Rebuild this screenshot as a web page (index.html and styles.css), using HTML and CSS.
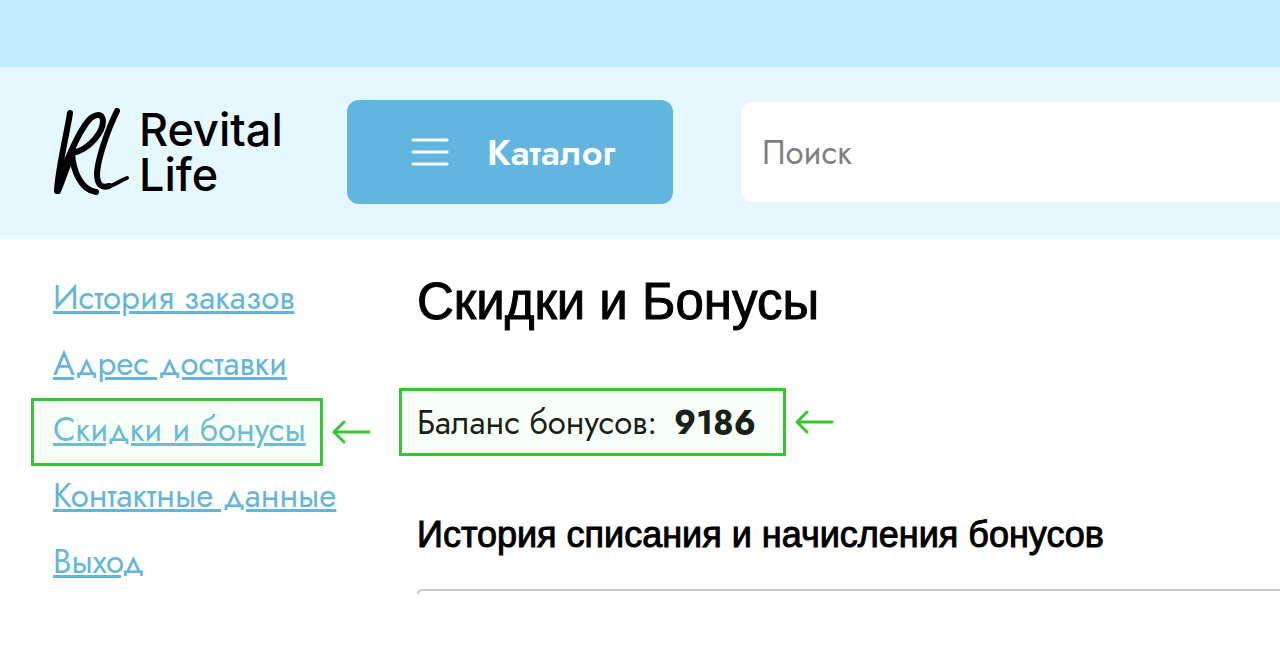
FILE: index.html
```html
<!DOCTYPE html>
<html lang="ru">
<head>
    <meta charset="UTF-8">
    <meta name="viewport" content="width=device-width, initial-scale=1.0">
    <title>Скидки и Бонусы</title>
    <link rel="stylesheet" href="styles.css">
</head>
<body>
    <div class="topbar"></div>
    <header class="header">
        <a class="logo" href="#">
            <svg class="logo-mark" width="78" height="90" viewBox="0 0 78 90" fill="none" stroke="#000" stroke-linecap="round" stroke-linejoin="round" aria-hidden="true">
                <path d="M17 6C14 26 5 62 4 84" stroke-width="6"/>
                <path d="M5 84C8 67 20 36 32 18C40 6 50 5 50 14C50 25 37 42 20 46" stroke-width="6"/>
                <path d="M4 84L8 62L19 42L19 50L7 82Z" fill="#000" stroke-width="4"/>
                <path d="M19 46C20 64 28 83 43 85" stroke-width="6"/>
                <path d="M64 4C55 22 45 51 44 66C44 79 49 81 56 79" stroke-width="6"/>
                <path d="M50 80C58 81 64 75 74 71" stroke-width="4"/>
            </svg>
            <span class="logo-text">
                <span>Revital</span>
                <span>Life</span>
            </span>
        </a>
        <button class="catalog" type="button">
            <svg width="38" height="30" viewBox="0 0 38 30" stroke="#fff" stroke-width="3" stroke-linecap="round" aria-hidden="true">
                <path d="M2 3H36M2 15H36M2 27H36"/>
            </svg>
            <span>Каталог</span>
        </button>
        <input class="search" type="search" placeholder="Поиск" aria-label="Поиск">
    </header>

    <div class="page">
        <nav class="menu">
            <a href="#">История заказов</a>
            <a href="#">Адрес доставки</a>
            <div class="pointed">
                <a class="marked" href="#">Скидки и бонусы</a>
                <svg class="arrow" width="40" height="24" viewBox="0 0 40 24" aria-hidden="true">
                    <path d="M38 12H3M13 2L3 12L13 22"/>
                </svg>
            </div>
            <a href="#">Контактные данные</a>
            <a href="#">Выход</a>
        </nav>

        <main class="content">
            <h1>Скидки и Бонусы</h1>
            <div class="pointed">
                <p class="marked balance">Баланс бонусов: <strong>9186</strong></p>
                <svg class="arrow" width="40" height="24" viewBox="0 0 40 24" aria-hidden="true">
                    <path d="M38 12H3M13 2L3 12L13 22"/>
                </svg>
            </div>
            <h2>История списания и начисления бонусов</h2>
            <div class="history"></div>
        </main>
    </div>
</body>
</html>
```
FILE: styles.css
```css
* {
    margin: 0;
    padding: 0;
    box-sizing: border-box;
}

body {
    font-family: Jost, Lato, sans-serif;
    font-size: 33px;
    color: #1a1f1a;
    background-color: #fff;
    overflow-x: hidden;
}

.topbar {
    height: 67px;
    background-color: #c3ecff;
}

.header {
    display: flex;
    align-items: center;
    height: 172px;
    padding: 0 0 2px 53px;
    background-color: #e5f7ff;
}

.logo {
    display: flex;
    align-items: center;
    gap: 8px;
    width: 294px;
    color: #000;
    text-decoration: none;
}

.logo-text {
    display: flex;
    flex-direction: column;
    font-family: Inter, sans-serif;
    font-size: 45px;
    font-weight: 500;
    line-height: 45px;
}

.catalog {
    display: flex;
    align-items: center;
    gap: 38px;
    width: 326px;
    height: 104px;
    padding-left: 64px;
    border: none;
    border-radius: 12px;
    background-color: #61b5de;
    color: #fff;
    font-family: inherit;
    font-size: 36px;
    font-weight: 600;
    cursor: pointer;
}

.search {
    flex: 1;
    min-width: 0;
    height: 100px;
    margin-left: 68px;
    padding-left: 21px;
    border: none;
    border-radius: 12px 0 0 12px;
    background-color: #fff;
    font-family: inherit;
    font-size: 33px;
}

.search::placeholder {
    color: #808080;
}

.page {
    display: flex;
    padding-left: 31px;
}

.menu {
    display: flex;
    flex-direction: column;
    width: 368px;
    padding-top: 28px;
    line-height: 62px;
}

.menu a {
    padding: 0 0 4px 22px;
    color: #64b5db;
    text-decoration-thickness: 3px;
    text-underline-offset: 2px;
}

.pointed {
    display: flex;
    align-items: center;
    gap: 8px;
}

.menu .pointed {
    margin: -1px 0;
}

.marked {
    height: 68px;
    border: 3px solid #3ac435;
    background-color: #f8fff8;
}

.menu .marked {
    padding: 0 14px 0 19px;
    line-height: 58px;
    color: #6bbcd4;
}

.arrow {
    fill: none;
    stroke: #3ac435;
    stroke-width: 3;
    stroke-linecap: round;
}

.content {
    flex: 1;
    padding-top: 33px;
}

h1,
h2 {
    padding-left: 18px;
    color: #000;
    font-family: "Liberation Sans", Arial, sans-serif;
    font-weight: normal;
    -webkit-text-stroke: 1px #000;
}

h1 {
    margin-bottom: 56px;
    font-size: 51px;
    line-height: 60px;
}

h2 {
    margin-top: 58px;
    font-size: 36px;
    line-height: 42px;
}

.balance {
    padding: 0 27px 0 15px;
    line-height: 64px;
}

.balance strong {
    margin-left: 7px;
    font-weight: 700;
}

.history {
    height: 5px;
    margin: 33px 0 0 18px;
    border: 2px solid #c8c8c8;
    border-right: none;
    border-bottom: none;
    border-radius: 5px 0 0 0;
}
```
